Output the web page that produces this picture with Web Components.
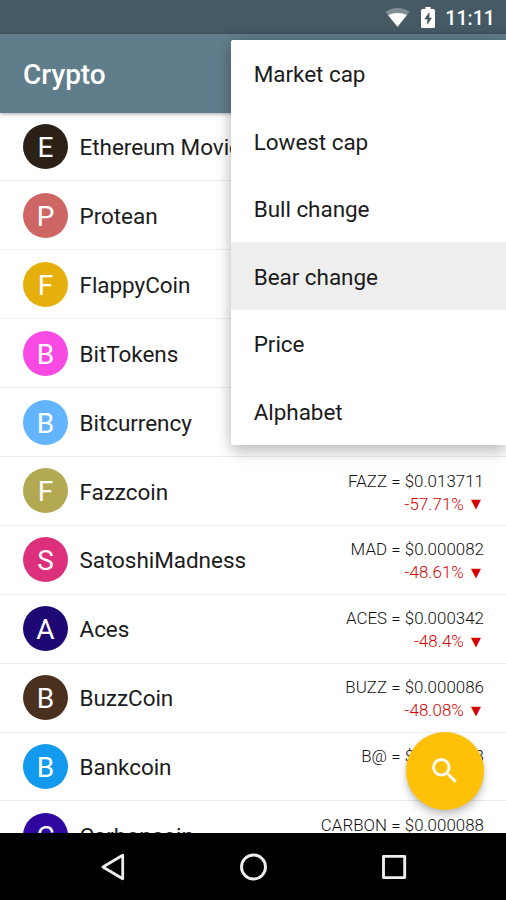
<!DOCTYPE html>
<html lang="en"><head><meta charset="utf-8"><title>Crypto</title>
<style>html,body{margin:0;padding:0}body{width:506px;height:900px;overflow:hidden;background:#fff;font-family:Roboto,"Liberation Sans",sans-serif}</style>
</head><body>
<crypto-app></crypto-app>
<script>
const define=(name,html,init)=>customElements.define(name,class extends HTMLElement{
  connectedCallback(){
    if(this.shadowRoot)return;
    const t=document.createElement('template');
    t.innerHTML=html;
    this.attachShadow({mode:'open'}).append(t.content.cloneNode(true));
    if(init)init(this,this.shadowRoot);
  }
});

define('status-bar',`<style>
:host{display:flex;height:34px;background:#455a64;align-items:center;justify-content:flex-end;box-sizing:border-box;padding:1px 11px 0 0;color:#fff;font-size:19.6px;font-weight:500;line-height:31px}
.wifi{margin-right:11px}.bat{margin-right:10px}span{padding-top:2px}
</style>
<svg class="wifi" width="25" height="19" viewBox="0 0 24 19"><path d="M0 4C7-1.300 17-1.300 24 4L12 18.800z" fill="#fff" opacity=".32"/><path d="M2.700 7.300C8 4.300 16 4.300 21.300 7.300L12 18.800z" fill="#fff"/></svg>
<svg class="bat" width="14" height="21" viewBox="0 0 14 21"><path d="M4.3 0h5.4v2H12.500Q14 2 14 3.500V19.500Q14 21 12.500 21H1.500Q0 21 0 19.500V3.500Q0 2 1.500 2H4.300z" fill="#fff"/><path d="M8.400 5L3.200 12.300H6.300V18L11 10.800H8.400z" fill="#455a64"/></svg>
<span>11:11</span>`);

define('app-toolbar',`<style>
:host{display:flex;height:78.500px;box-sizing:border-box;align-items:center;padding:2px 0 0 23px;background:#607d8b;color:#fff;font-size:28px;font-weight:500;position:relative;z-index:1;box-shadow:0 1px 4px rgba(0,0,0,.35)}
</style><slot></slot>`);

define('coin-row',`<style>
:host{display:flex;height:68.900px;box-sizing:border-box;border-bottom:1.400px solid #ededed;align-items:center;padding:0 22px 0 23px;color:#1c1c1c}
.av{flex:none;width:45px;height:45px;border-radius:50%;background:var(--c);color:#fff;font-size:28px;line-height:47px;text-align:center}
.name{margin-left:11.500px;font-size:22.500px;letter-spacing:-.05px;white-space:nowrap;flex:1;padding-top:1.400px}
.r{text-align:right;font-size:16.900px;line-height:23px;white-space:nowrap;padding-top:3.400px;font-weight:300;color:#111}
.p{letter-spacing:.03px}
.d{color:#d50000;letter-spacing:.08px}.t{display:inline-block;font:13px/13px "DejaVu Sans",sans-serif;margin:0 3px 0 7px;vertical-align:1.500px}
</style><div class="av"></div><div class="name"><slot></slot></div><div class="r"><div class="p"></div><div class="d"><span class="v"></span><span class="t">▼</span></div></div>`,
(el,s)=>{
  s.querySelector('.av').textContent=el.textContent[0];
  el.style.setProperty('--c',el.getAttribute('color'));
  s.querySelector('.p').textContent=el.getAttribute('price')||'';
  const c=el.getAttribute('change');
  if(c)s.querySelector('.v').textContent=c;else s.querySelector('.d').remove(),s.querySelector('.r').style.paddingBottom='23px';
});

define('menu-item',`<style>
:host{display:flex;height:67.500px;align-items:center;padding-left:22.700px;font-size:22.500px;letter-spacing:-.05px;color:#1c1c1c;box-sizing:border-box;padding-top:1.600px}
:host([selected]){background:#eee}
</style><slot></slot>`);

define('sort-menu',`<style>
:host{display:block;position:absolute;left:231px;right:0;top:39.600px;background:#fff;z-index:3;box-shadow:0 9px 14px rgba(0,0,0,.16),0 0 16px rgba(0,0,0,.16);border-radius:2px 0 0 2px}
</style><slot></slot>`);

define('search-fab',`<style>
:host{display:flex;position:absolute;left:406px;top:732px;width:78px;height:78px;border-radius:50%;background:#ffc107;align-items:center;justify-content:center;z-index:2;box-shadow:0 6px 9px rgba(0,0,0,.2),0 1px 4px rgba(0,0,0,.1)}
</style><svg width="33.700" height="33.700" viewBox="0 0 24 24" fill="#fff"><path d="M15.500 14h-.79l-.28-.27C15.410 12.590 16 11.110 16 9.500 16 5.910 13.090 3 9.500 3S3 5.910 3 9.500 5.910 16 9.500 16c1.610 0 3.090-.59 4.230-1.570l.27.28v.79l5 4.990L20.490 19l-4.990-5zm-6 0C7.010 14 5 11.990 5 9.500S7.010 5 9.500 5 14 7.010 14 9.500 11.990 14 9.500 14z"/></svg>`);

define('nav-bar',`<style>
:host{display:flex;height:67px;background:#000;align-items:center;justify-content:center;position:relative;z-index:2;padding-left:1px}
svg{margin:0 55.300px}
</style>
<svg width="30" height="30" viewBox="0 0 30 30" fill="none" stroke="#eee" stroke-width="2.800" stroke-linejoin="round"><path d="M24.700 3.200V26.800L4.900 15z"/></svg>
<svg width="30" height="30" viewBox="0 0 30 30" fill="none" stroke="#eee" stroke-width="2.900"><circle cx="14.500" cy="15" r="12"/></svg>
<svg width="30" height="30" viewBox="0 0 30 30" fill="none" stroke="#eee" stroke-width="2.900" stroke-linejoin="round"><rect x="4.500" y="4.400" width="21.200" height="21.200"/></svg>`);

define('crypto-app',`<style>
:host{display:flex;flex-direction:column;width:506px;height:900px;position:relative;overflow:hidden;background:#fff}
main{flex:1;min-height:0;overflow:hidden}
status-bar,app-toolbar,nav-bar{flex:none}
</style>
<status-bar></status-bar>
<app-toolbar>Crypto</app-toolbar>
<main>
<coin-row color="#2c2117">Ethereum Movie</coin-row>
<coin-row color="#ce6666">Protean</coin-row>
<coin-row color="#e5b00c">FlappyCoin</coin-row>
<coin-row color="#f94be4">BitTokens</coin-row>
<coin-row color="#62b4ff">Bitcurrency</coin-row>
<coin-row color="#b3a953" price="FAZZ = $0.013711" change="-57.71%">Fazzcoin</coin-row>
<coin-row color="#dc307d" price="MAD = $0.000082" change="-48.61%">SatoshiMadness</coin-row>
<coin-row color="#1e0974" price="ACES = $0.000342" change="-48.4%">Aces</coin-row>
<coin-row color="#4a301f" price="BUZZ = $0.000086" change="-48.08%">BuzzCoin</coin-row>
<coin-row color="#129aee" price="B@ = $0.000003">Bankcoin</coin-row>
<coin-row color="#2f06a0" price="CARBON = $0.000088">Carboncoin</coin-row>
</main>
<nav-bar></nav-bar>
<sort-menu><menu-item>Market cap</menu-item><menu-item>Lowest cap</menu-item><menu-item>Bull change</menu-item><menu-item selected>Bear change</menu-item><menu-item>Price</menu-item><menu-item>Alphabet</menu-item></sort-menu>
<search-fab></search-fab>`);
</script></body></html>
